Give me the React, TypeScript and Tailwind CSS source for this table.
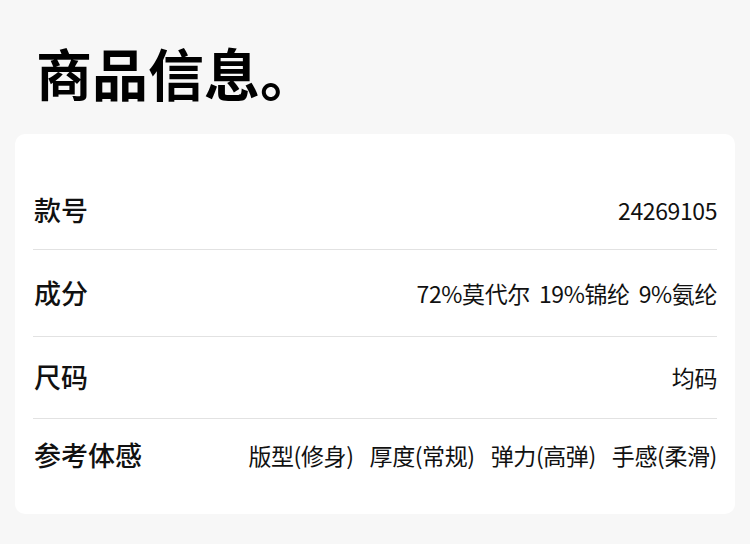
import * as React from "react";

type Row = {
  label: string;
  values: string[];
  height: string;
  gap: string;
};

const ROWS: Row[] = [
  { label: "款号", values: ["24269105"], height: "h-[79px]", gap: "gap-[11px]" },
  { label: "成分", values: ["72%莫代尔", "19%锦纶", "9%氨纶"], height: "h-[87px]", gap: "gap-[9px]" },
  { label: "尺码", values: ["均码"], height: "h-[82px]", gap: "gap-[11px]" },
  {
    label: "参考体感",
    values: ["版型(修身)", "厚度(常规)", "弹力(高弹)", "手感(柔滑)"],
    height: "h-[72px]",
    gap: "gap-[16px]",
  },
];

const FONT = "font-['Noto_Sans_CJK_SC','Noto_Sans',sans-serif]";

export default function App() {
  return (
    <div className={`w-[750px] h-[544px] bg-[#f7f7f7] overflow-hidden ${FONT}`}>
      <h1 className="pl-[36px] pt-[44px] text-[56px] leading-none font-bold text-black h-[134px]">
        商品信息。
      </h1>

      <div className="mx-[15px] bg-white rounded-[10px] px-[18px] pt-[37px] pb-[23px]">
        {ROWS.map((row, i) => (
          <div
            key={row.label}
            className={`flex items-center justify-between ${row.height} ${
              i < ROWS.length - 1 ? "border-b border-[#e2e2e2]" : ""
            }`}
          >
            <span className="text-[27px] font-medium text-[#111] pl-[1px]">{row.label}</span>
            <div className={`flex items-center ${row.gap} text-[23px] text-[#111] tracking-[-0.4px]`}>
              {row.values.map(v => (
                <span key={v}>{v}</span>
              ))}
            </div>
          </div>
        ))}
      </div>
    </div>
  );
}
